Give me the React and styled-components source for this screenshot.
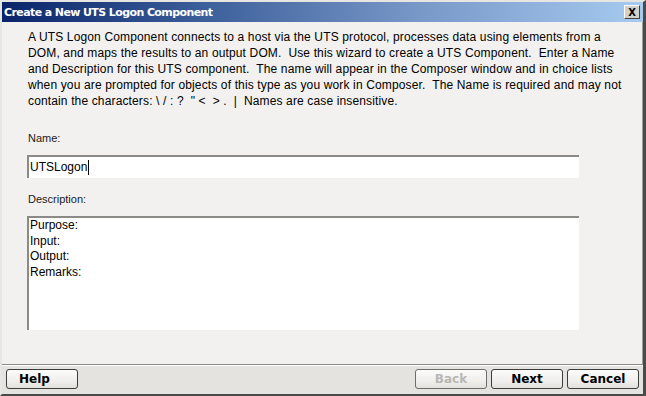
import React from "react";
import styled, { createGlobalStyle } from "styled-components";

const GlobalStyle = createGlobalStyle`
  html, body {
    margin: 0;
    padding: 0;
    background: #d4d0c8;
  }
  * {
    box-sizing: border-box;
  }
`;

function App() {
  return (
    <>
      <GlobalStyle />
      <Window>
        <TitleBar>
          <Title>Create a New UTS Logon Component</Title>
          <CloseBtn>X</CloseBtn>
        </TitleBar>
        <Body>
          <Intro>
            A UTS Logon Component connects to a host via the UTS protocol,
            processes data using elements from a
            <br />
            DOM, and maps the results to an output DOM.&nbsp; Use this wizard
            to create a UTS Component.&nbsp; Enter a Name
            <br />
            and Description for this UTS component.&nbsp; The name will appear
            in the Composer window and in choice lists
            <br />
            when you are prompted for objects of this type as you work in
            Composer.&nbsp; The Name is required and may not
            <br />
            contain the characters: \ / : ? &nbsp;" &lt; &nbsp;&gt; . &nbsp;|
            &nbsp;Names are case insensitive.
          </Intro>
          <Label $top={23}>Name:</Label>
          <NameField>
            UTSLogon
            <Caret />
          </NameField>
          <Label $top={15}>Description:</Label>
          <DescField>
            Purpose:
            <br />
            Input:
            <br />
            Output:
            <br />
            Remarks:
          </DescField>
        </Body>
        <Footer>
          <Button $wide>Help</Button>
          <Spacer />
          <Button $disabled>Back</Button>
          <Button>Next</Button>
          <Button>Cancel</Button>
        </Footer>
      </Window>
    </>
  );
}

const Window = styled.div`
  width: 646px;
  height: 396px;
  display: flex;
  flex-direction: column;
  background: #f2f1ef;
  border-top: 2px solid #e8e6e2;
  border-left: 2px solid #e8e6e2;
  border-right: 3px solid #4a4a48;
  border-bottom: 2px solid #4a4a48;
  box-shadow: inset -1px 0 0 #9e9c98;
`;

const TitleBar = styled.div`
  height: 20px;
  flex: none;
  display: flex;
  align-items: center;
  justify-content: space-between;
  padding: 0 3px 0 2px;
  background: linear-gradient(to right, #0a246a 0%, #3a5c98 30%, #7898c8 65%, #a6caf0 100%);
`;

const Title = styled.span`
  color: #ffffff;
  font-family: "DejaVu Sans", Verdana, sans-serif;
  font-size: 11px;
  font-weight: bold;
  letter-spacing: -0.6px;
`;

const CloseBtn = styled.div`
  width: 16px;
  height: 14px;
  display: flex;
  align-items: center;
  justify-content: center;
  background: #d4d0c8;
  border-top: 1px solid #ffffff;
  border-left: 1px solid #ffffff;
  border-right: 1px solid #404040;
  border-bottom: 1px solid #404040;
  font-family: "DejaVu Sans", sans-serif;
  font-size: 10px;
  font-weight: bold;
  color: #000;
`;

const Body = styled.div`
  flex: 1;
  display: flex;
  flex-direction: column;
  padding: 7px 64px 0 25px;
  font-family: "Liberation Sans", Arial, sans-serif;
  color: #000;
`;

const Intro = styled.p`
  margin: 0 0 0 1px;
  font-size: 12px;
  line-height: 16px;
  letter-spacing: 0.14px;
  white-space: nowrap;
`;

const Label = styled.div`
  margin: ${(p) => p.$top}px 0 0 1px;
  height: 23px;
  font-size: 11px;
  line-height: 12px;
  color: #1a1a1a;
`;

const Field = styled.div`
  background: #ffffff;
  border-top: 2px solid #8c8a86;
  border-left: 2px solid #8c8a86;
  font-size: 12px;
  line-height: 15.6px;
  padding: 0 0 0 1px;
`;

const NameField = styled(Field)`
  height: 23px;
  display: flex;
  align-items: center;
`;

const Caret = styled.span`
  display: inline-block;
  width: 1px;
  height: 15px;
  background: #000;
  margin-left: 1px;
`;

const DescField = styled(Field)`
  height: 114px;
`;

const Footer = styled.div`
  height: 30px;
  flex: none;
  display: flex;
  align-items: center;
  gap: 4px;
  padding: 0 4px 2px 4px;
  background: #e4e3df;
  border-top: 1px solid #8c8a86;
  box-shadow: inset 0 1px 0 #ffffff;
`;

const Spacer = styled.div`
  flex: 1;
`;

const Button = styled.div`
  width: 72px;
  height: 20px;
  display: flex;
  align-items: center;
  justify-content: ${(p) => (p.$wide ? "flex-start" : "center")};
  padding-left: ${(p) => (p.$wide ? "12px" : "0")};
  border: 1px solid ${(p) => (p.$disabled ? "#6e6d6a" : "#3c3c3a")};
  border-radius: 3px;
  background: linear-gradient(to bottom, #fbfbfa 0%, #f0efec 60%, #e2e1dd 100%);
  font-family: "DejaVu Sans", Verdana, sans-serif;
  font-size: 12px;
  font-weight: bold;
  color: ${(p) => (p.$disabled ? "#b8b7b4" : "#000")};
`;

export default App;
